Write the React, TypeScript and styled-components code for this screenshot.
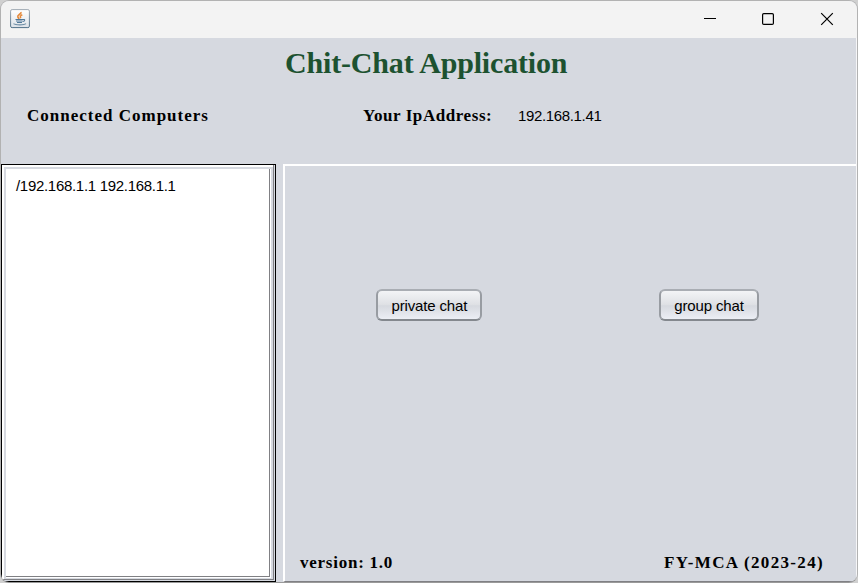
import React from "react";
import styled, { createGlobalStyle } from "styled-components";

const Global = createGlobalStyle`
  * { box-sizing: border-box; }
  body { margin: 0; background: #d0d0d0; overflow: hidden; }
`;

const Window = styled.main`
  width: 858px;
  height: 583px;
  display: flex;
  flex-direction: column;
  border: 1px solid #b2b2b2;
  border-bottom-color: #9a9a9a;
  border-radius: 9px;
  overflow: hidden;
  background: #d6d9e0;
  color: #000;
  font-family: "Liberation Sans", Arial, sans-serif;
`;

const TitleBar = styled.header`
  height: 37px;
  flex: none;
  display: flex;
  align-items: center;
  justify-content: space-between;
  padding: 0 1px 2px 9px;
  background: #f3f3f3;
`;

const Controls = styled.div`
  display: flex;
`;

const Control = styled.button`
  width: 58.5px;
  height: 34px;
  display: grid;
  place-items: center;
  padding: 0;
  border: 0;
  background: none;
`;

const Content = styled.div`
  flex: 1;
  display: flex;
  flex-direction: column;
  border-right: 1px solid #f6f6f8;
`;

const Heading = styled.section`
  height: 126px;
  flex: none;
`;

const Title = styled.h1`
  margin: 0;
  padding: 7px 0 0 284px;
  height: 66px;
  font: bold 30px/36px "Liberation Serif", "Times New Roman", serif;
  letter-spacing: -0.17px;
  color: #1d5230;
  white-space: nowrap;
`;

const InfoRow = styled.div`
  display: grid;
  grid-template-columns: 336px 155px 1fr;
  padding-left: 26px;
  line-height: 24px;
`;

const Label = styled.span<{ $spacing: number }>`
  font: bold 17px/24px "Liberation Serif", "Times New Roman", serif;
  letter-spacing: ${(p) => p.$spacing}px;
  white-space: nowrap;
`;

const Value = styled.span<{ $spacing: number }>`
  font-size: 15px;
  line-height: 24px;
  letter-spacing: ${(p) => p.$spacing}px;
  white-space: nowrap;
`;

const Panels = styled.section`
  flex: 1;
  display: grid;
  grid-template-columns: 275px 1fr;
  column-gap: 7px;
`;

const ListFrame = styled.div`
  display: flex;
  border: 1px solid #000;
  box-shadow: inset -1px -1px #d6d9e0, inset -2px -2px #808084,
    inset 2px 2px #fff;
  background: #d6d9e0;
  padding: 4px 4px 3px 4px;
`;

const ComputerList = styled.div`
  flex: 1;
  border-right: 1px solid #fff;
  border-bottom: 1px solid #fff;
  background: #fff;
  box-shadow: inset -1px -1px #808084;
  padding: 5px 10px;
`;

const ChatPanel = styled.div`
  display: flex;
  flex-direction: column;
  border-top: 2px solid #fff;
  border-left: 2px solid #fff;
  border-bottom: 1px solid #808084;
`;

const Actions = styled.div`
  flex: 1;
  display: flex;
  align-items: flex-start;
  gap: 176.6px;
  padding: 123px 0 0 91.4px;
`;

const ChatButton = styled.button<{ $width: number }>`
  width: ${(p) => p.$width}px;
  height: 32px;
  padding: 2px 0 0;
  border: 2px solid;
  border-color: #a9adb3 #989ca2 #84888e;
  border-radius: 6px;
  background: linear-gradient(#f3f4f6 0%, #dfe1e5 48%, #d6d9df 53%, #eceef5 100%);
  font: 15px/26px "Liberation Sans", Arial, sans-serif;
  letter-spacing: -0.15px;
  color: #000;
`;

const Footer = styled.footer`
  display: flex;
  justify-content: space-between;
  padding: 0 32px 6px 15px;
`;

function JavaIcon() {
  return (
    <svg width="20" height="20" viewBox="0 0 20 20" fill="none">
      <defs>
        <linearGradient id="tile" x2="0" y2="1">
          <stop stopColor="#fff" />
          <stop offset="1" stopColor="#dce2e8" />
        </linearGradient>
        <linearGradient id="edge" x2="0" y2="1">
          <stop stopColor="#a0aab3" />
          <stop offset="1" stopColor="#4f7088" />
        </linearGradient>
      </defs>
      <rect x=".6" y=".6" width="18.8" height="18" rx="1.5" fill="url(#tile)" stroke="url(#edge)" />
      <path d="M11 3c.8 2-4 3-3.2 4.8.2.8 1 1.5 1.2 2.2M12.3 5.8c-2.8 1.2-2.1 2-1.6 3.5" stroke="#e58a3c" strokeWidth="1.6" />
      <path d="M5.5 10.5h7.5M6 12h6.5M7 13.5h5M13 10.5c2.3-.4 2.3 1.7-.3 2" stroke="#50799a" strokeWidth="1.1" />
      <path d="M3.5 14.6c2 1.7 10.5 1.7 12.5 0" stroke="#6d8da5" strokeWidth="1.2" />
    </svg>
  );
}

export default function App() {
  return (
    <>
      <Global />
      <Window>
        <TitleBar>
          <JavaIcon />
          <Controls>
            <Control aria-label="Minimize">
              <svg width="14" height="14" stroke="#000" strokeWidth="1"><path d="M1 6.5h12" /></svg>
            </Control>
            <Control aria-label="Maximize">
              <svg width="14" height="14" fill="none" stroke="#000" strokeWidth="1.2"><rect x="1.6" y="1.6" width="10.8" height="10.8" rx="1.2" /></svg>
            </Control>
            <Control aria-label="Close">
              <svg width="14" height="14" stroke="#000" strokeWidth="1.2"><path d="m1.2 1.2 11.6 11.6M12.8 1.2 1.2 12.8" /></svg>
            </Control>
          </Controls>
        </TitleBar>
        <Content>
          <Heading>
            <Title>Chit-Chat Application</Title>
            <InfoRow>
              <Label $spacing={1}>Connected Computers</Label>
              <Label $spacing={0.57}>Your IpAddress:</Label>
              <Value $spacing={-0.35}>192.168.1.41</Value>
            </InfoRow>
          </Heading>
          <Panels>
            <ListFrame>
              <ComputerList>
                <Value $spacing={-0.3}>/192.168.1.1 192.168.1.1</Value>
              </ComputerList>
            </ListFrame>
            <ChatPanel>
              <Actions>
                <ChatButton $width={106}>private chat</ChatButton>
                <ChatButton $width={100}>group chat</ChatButton>
              </Actions>
              <Footer>
                <Label $spacing={0.75}>version: 1.0</Label>
                <Label $spacing={1.33}>FY-MCA (2023-24)</Label>
              </Footer>
            </ChatPanel>
          </Panels>
        </Content>
      </Window>
    </>
  );
}
